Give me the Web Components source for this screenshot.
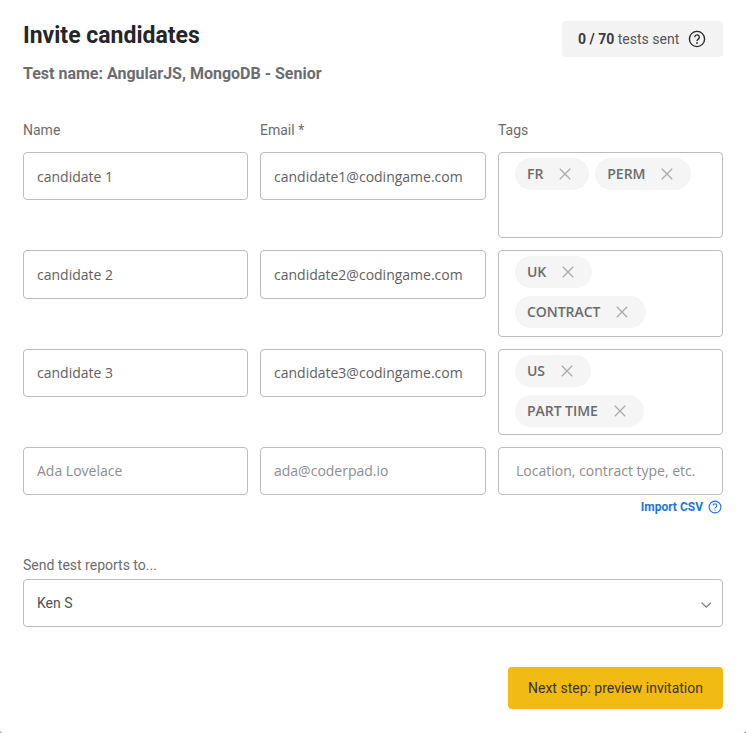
<!DOCTYPE html>
<html>
<head>
<meta charset="utf-8">
<title>Invite candidates</title>
<style>
  html, body { margin: 0; padding: 0; background: #8a8a8a; }
</style>
</head>
<body>
<invite-dialog></invite-dialog>

<script>
const HELP_ICON = `<svg viewBox="0 0 18 18" width="100%" height="100%" fill="none" stroke="currentColor">
  <circle cx="9" cy="9" r="7.6" stroke-width="1.4"/>
  <path d="M6.7 7.2a2.3 2.3 0 1 1 3.6 1.9c-.8.5-1.3.9-1.3 1.9" stroke-width="1.4"/>
  <circle cx="9" cy="13" r=".9" fill="currentColor" stroke="none"/>
</svg>`;

class TextField extends HTMLElement {
  constructor() {
    super();
    this.attachShadow({ mode: 'open' });
    const value = this.getAttribute('value');
    const hint = this.getAttribute('placeholder');
    this.shadowRoot.innerHTML = `
      <style>
        :host { display: block; box-sizing: border-box; height: 48.2px; border: 1px solid #bdbdbd; border-radius: 4px;
          background: #fff; padding: 0 13px; font: 14px/46.8px "Open Sans", sans-serif; color: #5f6064; white-space: nowrap; overflow: hidden; }
        .hint { color: #8c8d90; }
        :host([tight]) { padding: 0 17px; }
        :host([low]) { line-height: 47.4px; }
      </style>
      ${value ? `<span>${value}</span>` : `<span class="hint">${hint || ''}</span>`}
    `;
  }
}

class TagChip extends HTMLElement {
  constructor() {
    super();
    this.attachShadow({ mode: 'open' });
    this.shadowRoot.innerHTML = `
      <style>
        :host { display: inline-flex; align-items: center; gap: 16px; height: 32px; box-sizing: border-box; padding: 0 12px;
          border-radius: 16px; background: #f5f5f5; font: 600 14px/32px "Open Sans", sans-serif; color: #6a6b6f; letter-spacing: -.05px; }
        svg { width: 12px; height: 12px; stroke: #a9aaac; stroke-width: 1.3; fill: none; flex: none; margin-right: 6px; }
      </style>
      <slot></slot>
      <svg viewBox="0 0 12 12"><path d="M.8.8l10.4 10.4M11.2.8L.8 11.2"/></svg>
    `;
  }
}

class TagBox extends HTMLElement {
  constructor() {
    super();
    this.attachShadow({ mode: 'open' });
    this.shadowRoot.innerHTML = `
      <style>
        :host { display: flex; flex-wrap: wrap; align-content: flex-start; gap: 8px 6px; box-sizing: border-box; height: 86.4px;
          border: 1px solid #bdbdbd; border-radius: 4px; background: #fff; padding: 5px 16px; }
      </style>
      <slot></slot>
    `;
  }
}

class SelectField extends HTMLElement {
  constructor() {
    super();
    this.attachShadow({ mode: 'open' });
    this.shadowRoot.innerHTML = `
      <style>
        :host { display: flex; align-items: center; justify-content: space-between; box-sizing: border-box; height: 48px;
          border: 1px solid #bdbdbd; border-radius: 4px; background: #fff; padding: 0 10px 0 13px;
          font: 14px "Roboto", sans-serif; color: #4f5054; }
        svg { width: 10.6px; height: 6px; stroke: #77787b; stroke-width: 1.4; fill: none; margin-top: 3px; }
      </style>
      <slot></slot>
      <svg viewBox="0 0 12 7" preserveAspectRatio="none"><path d="M.7.7L6 6l5.3-5.3"/></svg>
    `;
  }
}

class InviteDialog extends HTMLElement {
  constructor() {
    super();
    this.attachShadow({ mode: 'open' });
    const rows = [
      ['candidate 1', 'candidate1@codingame.com', ['FR', 'PERM'], 'low'],
      ['candidate 2', 'candidate2@codingame.com', ['UK', 'CONTRACT'], 'low'],
      ['candidate 3', 'candidate3@codingame.com', ['US', 'PART TIME'], ''],
    ];
    this.shadowRoot.innerHTML = `
      <style>
        :host { display: block; box-sizing: border-box; width: 746px; height: 733px; padding: 21px 23px 0; background: #fff;
          border-radius: 0 0 3px 3px; font-family: "Roboto", sans-serif; overflow: hidden; }
        .head { display: flex; justify-content: space-between; align-items: flex-start; height: 84px; }
        h1 { margin: 0; font: 700 23px/30px "Roboto", sans-serif; color: #25262a; }
        h2 { margin: 13px 0 0; font: 700 16px/19px "Roboto", sans-serif; color: #6b6c70; }
        .quota { display: flex; align-items: center; gap: 9px; box-sizing: border-box; width: 161px; height: 36px; padding: 0 16px;
          background: #f3f3f3; border-radius: 4px; font-size: 14px; color: #55565a; white-space: nowrap; }
        .quota b { color: #3a3b3e; font-weight: 700; }
        .quota i { display: block; width: 18px; height: 18px; color: #2b2c2f; flex: none; }
        .grid { display: grid; grid-template-columns: 225px 226px 225px; gap: 12px; margin-top: 15px; }
        .label { font: 14px/20px "Roboto", sans-serif; color: #6b6c70; }
        .import { display: flex; justify-content: flex-end; align-items: center; gap: 5px; margin-top: 5px; height: 14px;
          font: 700 12px/14px "Roboto", sans-serif; color: #1a73e8; }
        .import i { display: block; width: 14px; height: 14px; margin-right: 1px; }
        .send { margin-top: 41px; }
        .send .label { margin-bottom: 4px; }
        .foot { display: flex; justify-content: flex-end; margin-top: 40px; }
        button { all: unset; box-sizing: border-box; width: 215px; height: 42px; background: #f2bb13; border-radius: 4px;
          text-align: center; font: 14px/42px "Roboto", sans-serif; color: #3a3327; }
      </style>
      <div class="head">
        <div>
          <h1>Invite candidates</h1>
          <h2>Test name: AngularJS, MongoDB - Senior</h2>
        </div>
        <div class="quota"><span><b>0 / 70</b> tests sent</span><i>${HELP_ICON}</i></div>
      </div>
      <div class="grid">
        <div class="label">Name</div><div class="label">Email *</div><div class="label">Tags</div>
        ${rows.map(([n, e, tags, low]) => `
          <text-field ${low} value="${n}"></text-field>
          <text-field ${low} value="${e}"></text-field>
          <tag-box>${tags.map(t => `<tag-chip>${t}</tag-chip>`).join('')}</tag-box>
        `).join('')}
        <text-field placeholder="Ada Lovelace"></text-field>
        <text-field placeholder="ada@coderpad.io"></text-field>
        <text-field tight placeholder="Location, contract type, etc."></text-field>
      </div>
      <div class="import"><span>Import CSV</span><i>${HELP_ICON}</i></div>
      <div class="send">
        <div class="label">Send test reports to...</div>
        <select-field>Ken S</select-field>
      </div>
      <div class="foot"><button>Next step: preview invitation</button></div>
    `;
  }
}

customElements.define('text-field', TextField);
customElements.define('tag-chip', TagChip);
customElements.define('tag-box', TagBox);
customElements.define('select-field', SelectField);
customElements.define('invite-dialog', InviteDialog);
</script>
</body>
</html>
